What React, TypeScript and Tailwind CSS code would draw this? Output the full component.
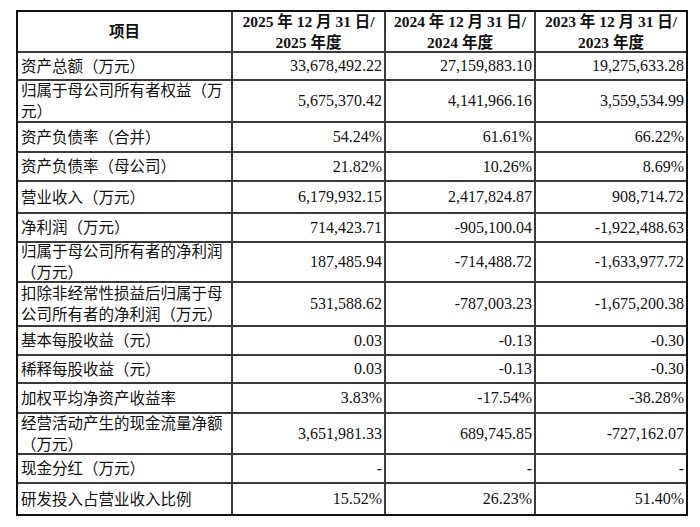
import React from "react";

type Row = { label: string[]; v: string[] };

const rows: Row[] = [
  { label: ["资产总额（万元）"], v: ["33,678,492.22", "27,159,883.10", "19,275,633.28"] },
  { label: ["归属于母公司所有者权益（万", "元）"], v: ["5,675,370.42", "4,141,966.16", "3,559,534.99"] },
  { label: ["资产负债率（合并）"], v: ["54.24%", "61.61%", "66.22%"] },
  { label: ["资产负债率（母公司）"], v: ["21.82%", "10.26%", "8.69%"] },
  { label: ["营业收入（万元）"], v: ["6,179,932.15", "2,417,824.87", "908,714.72"] },
  { label: ["净利润（万元）"], v: ["714,423.71", "-905,100.04", "-1,922,488.63"] },
  { label: ["归属于母公司所有者的净利润", "（万元）"], v: ["187,485.94", "-714,488.72", "-1,633,977.72"] },
  { label: ["扣除非经常性损益后归属于母", "公司所有者的净利润（万元）"], v: ["531,588.62", "-787,003.23", "-1,675,200.38"] },
  { label: ["基本每股收益（元）"], v: ["0.03", "-0.13", "-0.30"] },
  { label: ["稀释每股收益（元）"], v: ["0.03", "-0.13", "-0.30"] },
  { label: ["加权平均净资产收益率"], v: ["3.83%", "-17.54%", "-38.28%"] },
  { label: ["经营活动产生的现金流量净额", "（万元）"], v: ["3,651,981.33", "689,745.85", "-727,162.07"] },
  { label: ["现金分红（万元）"], v: ["-", "-", "-"] },
  { label: ["研发投入占营业收入比例"], v: ["15.52%", "26.23%", "51.40%"] },
];

const years = ["2025", "2024", "2023"];

export default function App() {
  return (
    <div className="w-[700px] h-[527px] bg-white pt-[10px] pl-[16px] text-[#111] font-['Liberation_Serif','Noto_Sans_CJK_SC',serif]">
      <div className="inline-block border-2 border-[#111]">
        <div className="grid grid-cols-[213px_151px_148px_150px] grid-rows-[39px_26px_40px_28px_27px_30px_27px_38px_42px_27px_26px_28px_39px_27px_30px] gap-[2px] bg-[#3a3a3a]">
          <div className="bg-white flex items-center justify-center font-bold text-[15.5px]">项目</div>
          {years.map((y) => (
            <div key={y} className="bg-white flex flex-col items-center justify-center font-bold text-[15.5px] leading-[21px] whitespace-nowrap">
              <span>{y} 年 12 月 31 日/</span>
              <span>{y} 年度</span>
            </div>
          ))}
          {rows.map((r, i) => (
            <React.Fragment key={i}>
              <div className="bg-white flex flex-col justify-center pl-[3px] text-[15.5px] leading-[21px] whitespace-nowrap">
                {r.label.map((l, j) => (
                  <span key={j}>{l}</span>
                ))}
              </div>
              {r.v.map((v, j) => (
                <div key={j} className="bg-white flex items-center justify-end pr-[2px] text-[16px] whitespace-nowrap">
                  {v}
                </div>
              ))}
            </React.Fragment>
          ))}
        </div>
      </div>
    </div>
  );
}
